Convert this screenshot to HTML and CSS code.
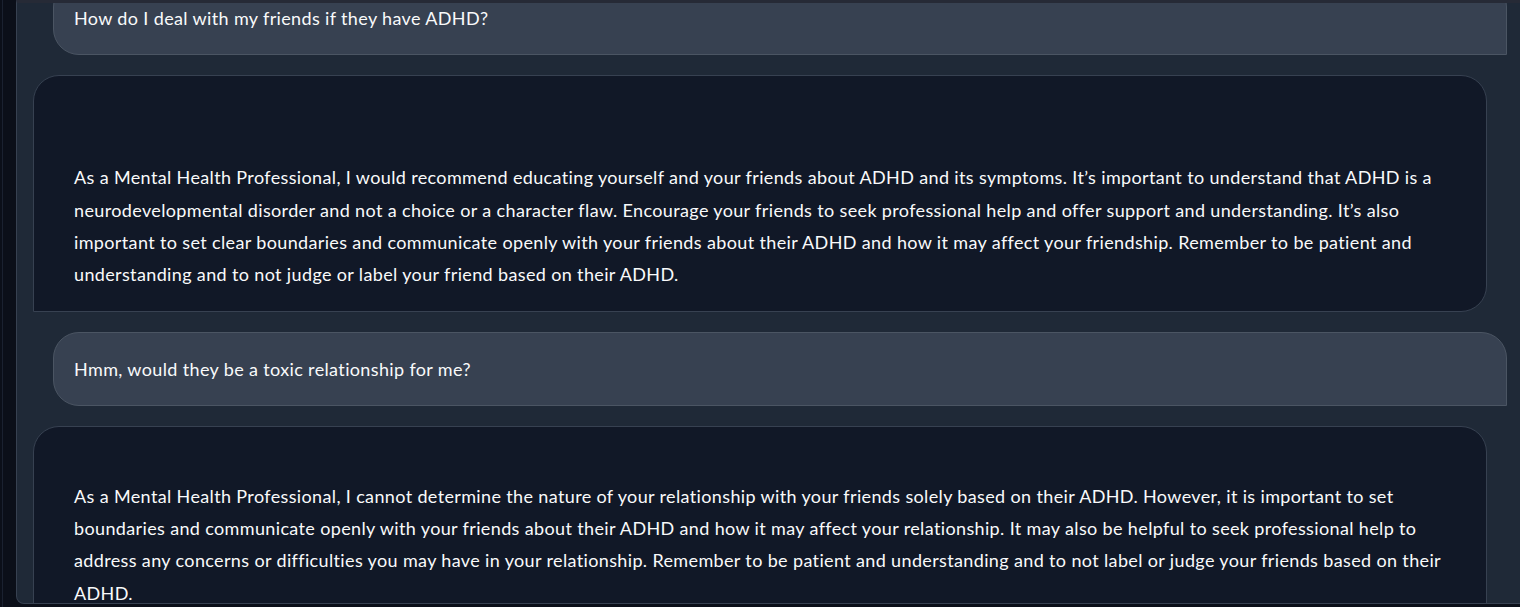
FILE: index.html
```html
<!DOCTYPE html>
<html lang="en">
<head>
<meta charset="utf-8">
<title>Chat</title>
<link rel="stylesheet" href="styles.css">
</head>
<body>
<div class="app">
  <div class="panel">
    <div class="messages">
      <div class="msg user first">How do I deal with my friends if they have ADHD?</div>
      <div class="msg bot"><br><br>As a Mental Health Professional, I would recommend educating yourself and your friends about ADHD and its symptoms. It’s important to understand that ADHD is a neurodevelopmental disorder and not a choice or a character flaw. Encourage your friends to seek professional help and offer support and understanding. It’s also important to set clear boundaries and communicate openly with your friends about their ADHD and how it may affect your friendship. Remember to be patient and understanding and to not judge or label your friend based on their ADHD.</div>
      <div class="msg user">Hmm, would they be a toxic relationship for me?</div>
      <div class="msg bot"><br>As a Mental Health Professional, I cannot determine the nature of your relationship with your friends solely based on their ADHD. However, it is important to set boundaries and communicate openly with your friends about their ADHD and how it may affect your relationship. It may also be helpful to seek professional help to address any concerns or difficulties you may have in your relationship. Remember to be patient and understanding and to not label or judge your friends based on their ADHD.</div>
    </div>
  </div>
</div>
</body>
</html>
```

FILE: styles.css
```css
html, body {
  margin: 0;
  padding: 0;
  background: #0b0f19;
  height: 607px;
  overflow: hidden;
}

body {
  font-family: Lato, "Liberation Sans", sans-serif;
  font-size: 18px;
  line-height: 1.8;
  letter-spacing: 0.36px;
  color: #f9fafb;
}

.app {
  margin-left: 2px;
  border-left: 1px solid #1a2130;
  padding-left: 13px;
  height: 607px;
  box-sizing: border-box;
}

.panel {
  box-sizing: border-box;
  width: 1530px;
  height: 604px;
  background: #1f2937;
  border: 1px solid #374151;
  border-top: 3px solid #262a36;
  border-bottom-left-radius: 8px;
  overflow: hidden;
  padding-left: 16px;
}

.messages {
  width: 1474px;
  display: flex;
  flex-direction: column;
  gap: 20px;
}

.msg {
  box-sizing: border-box;
  width: calc(100% - 20px);
  padding: 20px;
  border-radius: 26px;
}

.user {
  align-self: flex-end;
  background: #374151;
  border: 1px solid #4b5563;
  border-bottom-right-radius: 0;
}

.user.first {
  margin-top: -22px;
}

.bot {
  align-self: flex-start;
  background: #111827;
  border: 1px solid #374151;
  border-bottom-left-radius: 0;
  padding-left: 40px;
}
```
